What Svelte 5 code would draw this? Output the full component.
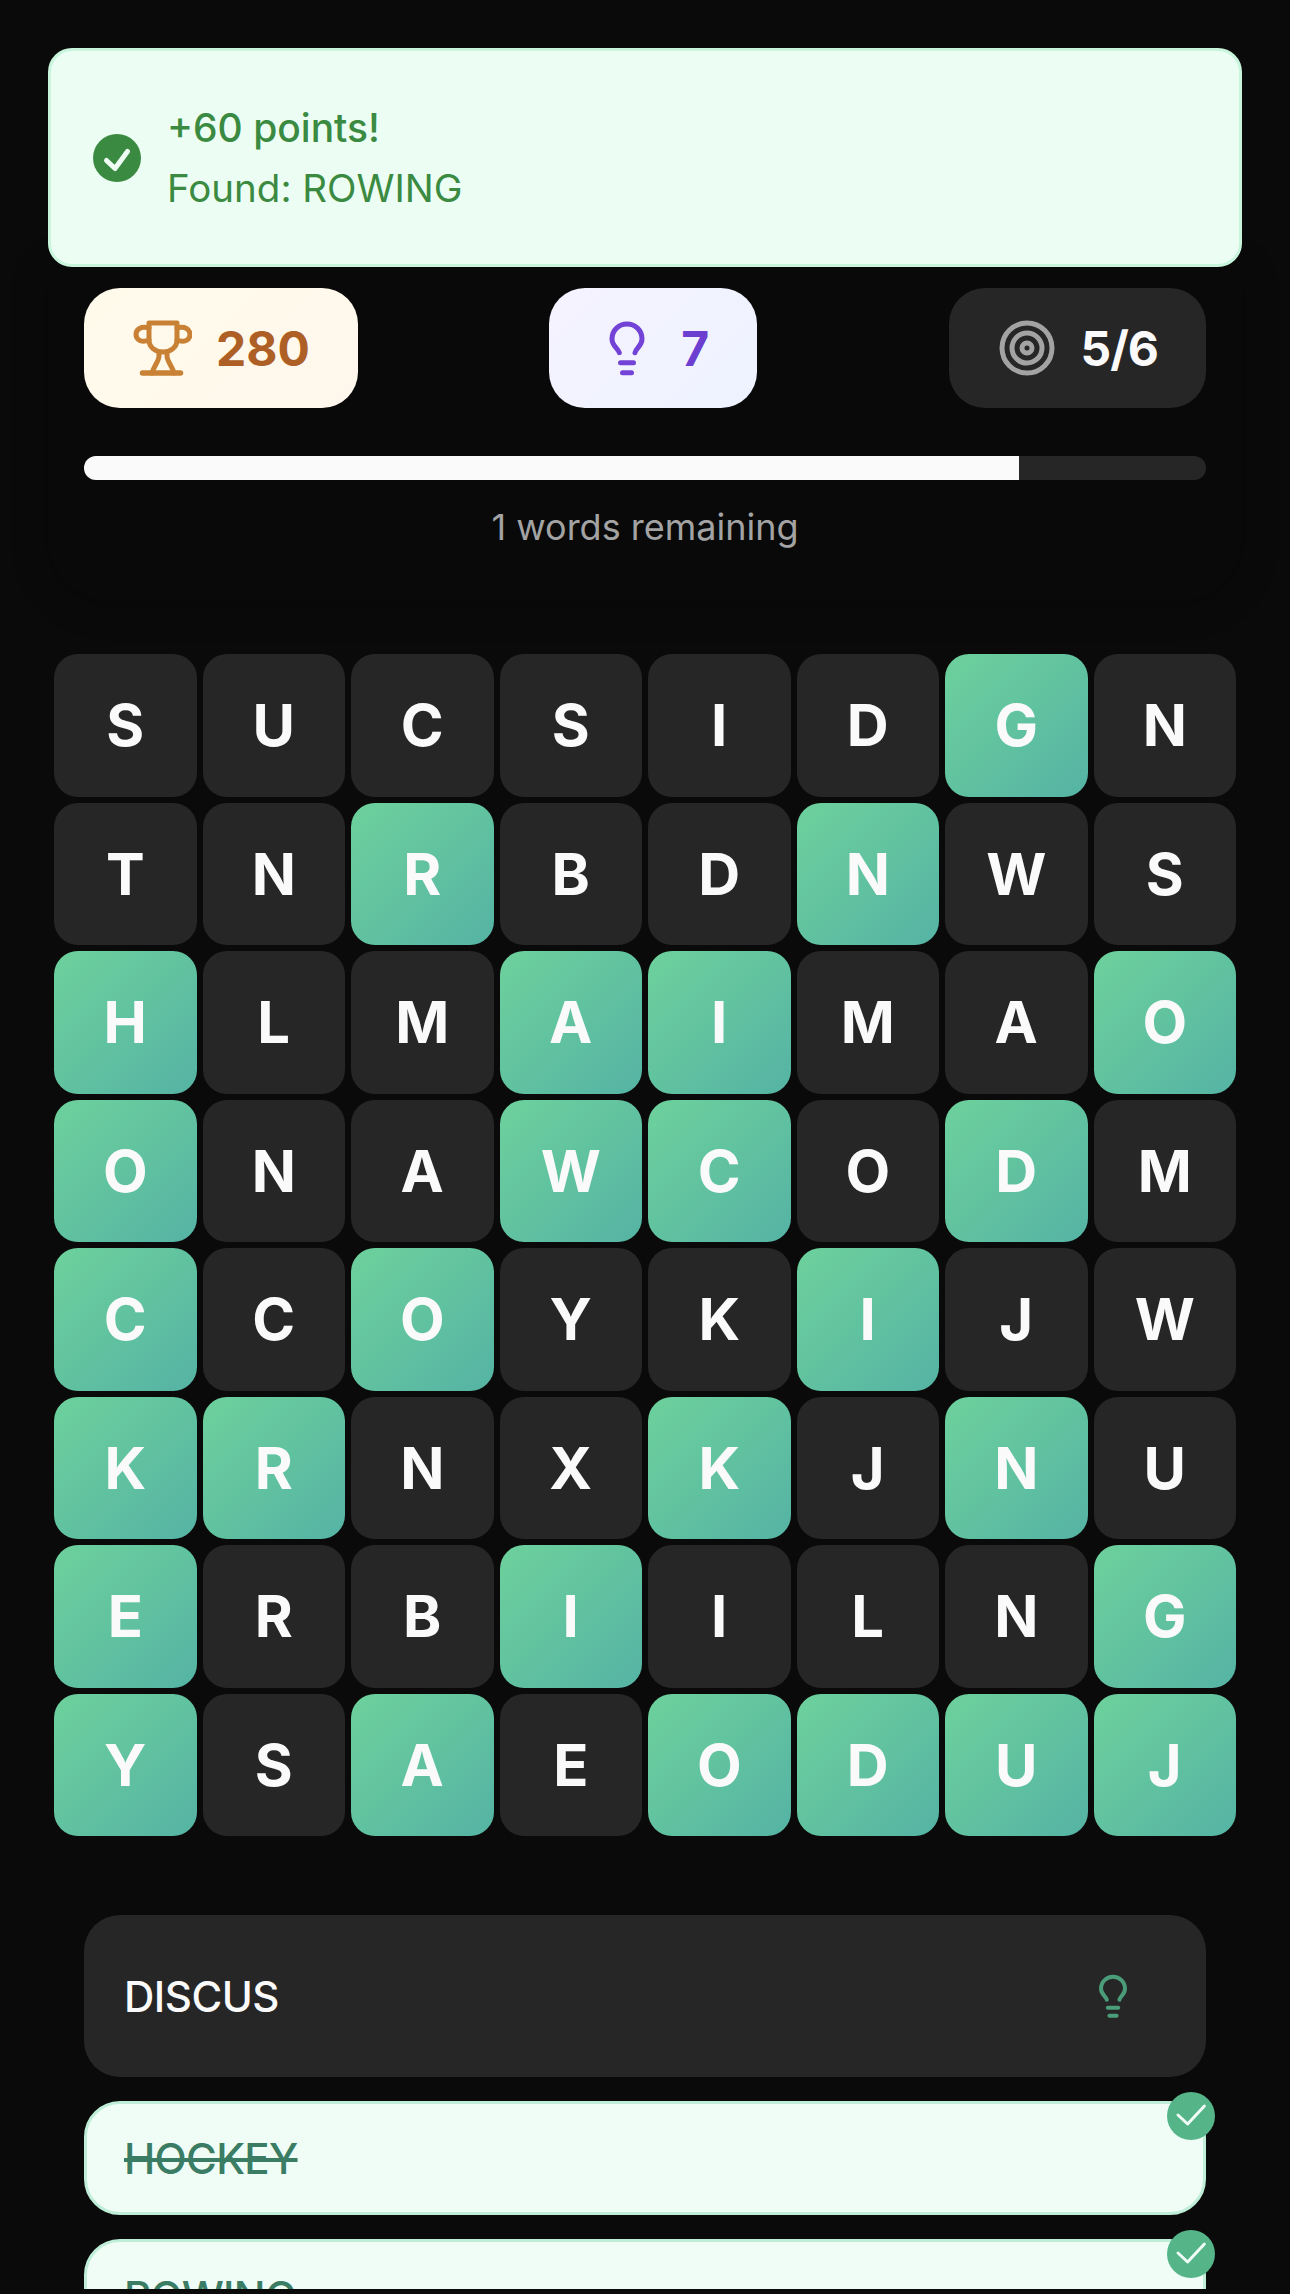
<script>
  const rows = [
    'SUCSIDGN',
    'TNRBDNWS',
    'HLMAIMAO',
    'ONAWCODM',
    'CCOYKIJW',
    'KRNXKJNU',
    'ERBIILNG',
    'YSAEODUJ'
  ]
  const found = new Set([
    '0-6', '1-2', '1-5', '2-0', '2-3', '2-4', '2-7', '3-0', '3-3', '3-4', '3-6',
    '4-0', '4-2', '4-5', '5-0', '5-1', '5-4', '5-6', '6-0', '6-3', '6-7',
    '7-0', '7-2', '7-4', '7-5', '7-6', '7-7'
  ])
  const doneWords = ['HOCKEY', 'ROWING']
</script>

<div class="screen">
  <div class="toast">
    <svg class="toast-icon" viewBox="0 0 48 48">
      <circle cx="24" cy="24" r="24" fill="#3a8a41" />
      <path d="M13.500 26.500 L22 34.500 L34.500 17.500" fill="none" stroke="#f0fdf4" stroke-width="5" stroke-linecap="round" stroke-linejoin="round" />
    </svg>
    <div class="toast-text">
      <p class="toast-title">+60 points!</p>
      <p class="toast-sub">Found: ROWING</p>
    </div>
  </div>

  <div class="header">
    <div class="stats">
      <div class="pill score">
        <svg viewBox="0 0 60 60" class="icon">
          <g fill="none" stroke="#c98235" stroke-width="5" stroke-linecap="round" stroke-linejoin="round">
            <path d="M17 5 H45 V22 C45 29 39 34 31 34 C23 34 17 29 17 22 Z" />
            <path d="M17 10 C9 8 4 11 4 16.500 C4 22 10 25 17 22" />
            <path d="M45 10 C53 8 58 11 58 16.500 C58 22 52 25 45 22" />
            <path d="M27 34 V38 C27 43 22 48 20 55 M35 34 V38 C35 43 40 48 42 55" />
            <path d="M10.500 55 H48.500" stroke-width="5.500" />
          </g>
        </svg>
        <span>280</span>
      </div>
      <div class="pill hints">
        <svg viewBox="0 0 60 60" class="icon">
          <g fill="none" stroke="#7243d6" stroke-width="5" stroke-linecap="round">
            <path d="M22.300 34.700 C21 30 15 28 15 21 C15 12 22 6 30 6 C38 6 45 12 45 21 C45 28 39 30 38 34.700" />
            <path d="M23.500 44.700 H36.500" />
            <path d="M25.500 54.700 H34.500" />
          </g>
        </svg>
        <span>7</span>
      </div>
      <div class="pill progress-pill">
        <svg viewBox="0 0 60 60" class="icon">
          <g fill="none" stroke="#a3a3a3" stroke-width="5">
            <circle cx="30" cy="30" r="25" />
            <circle cx="30" cy="30" r="15" />
            <circle cx="30" cy="30" r="5" />
          </g>
        </svg>
        <span>5/6</span>
      </div>
    </div>

    <div class="bar"><div class="bar-fill" style="width: 83.33%"></div></div>
    <p class="remaining">1 words remaining</p>
  </div>

  <div class="grid">
    {#each rows as row, r}
      {#each row.split('') as letter, c}
        <div class="tile" class:hit={found.has(r + '-' + c)}>{letter}</div>
      {/each}
    {/each}
  </div>

  <div class="words">
    <div class="word open">
      <span>DISCUS</span>
      <svg viewBox="0 0 60 60" class="word-bulb">
        <g fill="none" stroke="#4a9d78" stroke-width="5" stroke-linecap="round">
          <path d="M22.300 34.700 C21 30 15 28 15 21 C15 12 22 6 30 6 C38 6 45 12 45 21 C45 28 39 30 38 34.700" />
          <path d="M23.500 44.700 H36.500" />
          <path d="M25.500 54.700 H34.500" />
        </g>
      </svg>
    </div>
    {#each doneWords as w}
      <div class="word done">
        <span>{w}</span>
        <svg viewBox="0 0 48 48" class="badge">
          <circle cx="24" cy="24" r="24" fill="#55b488" />
          <path d="M11 23 L20.600 32 L37.400 14" fill="none" stroke="#f0fdf7" stroke-width="3" stroke-linecap="round" stroke-linejoin="round" />
        </svg>
      </div>
    {/each}
  </div>
</div>

<style>
  :global(body) {
    background: #0a0a0a;
  }

  .screen {
    height: 2289px;
    overflow: hidden;
    box-sizing: border-box;
    padding-top: 48px;
    background: #0a0a0a;
    font-family: Inter, "Noto Sans", sans-serif;
  }

  p {
    margin: 0;
  }

  .toast {
    position: relative;
    z-index: 1;
    box-sizing: border-box;
    height: 219px;
    margin: 0 48px;
    padding: 0 42px;
    display: flex;
    align-items: center;
    gap: 26px;
    background: #ecfdf3;
    border: 3px solid #c9f5dc;
    border-radius: 24px;
    color: #3a8a41;
  }

  .toast-icon {
    width: 48px;
    height: 48px;
    flex-shrink: 0;
  }

  .toast-title {
    font-size: 39px;
    font-weight: 500;
    line-height: 60px;
  }

  .toast-sub {
    font-size: 38.500px;
    line-height: 60px;
  }

  .header {
    margin: 0 48px;
    padding: 21px 36px 50px;
    border-radius: 0 0 60px 60px;
    background: #090909;
    box-shadow: 0 4px 36px rgba(0, 0, 0, 0.25);
  }

  .stats {
    display: flex;
    justify-content: space-between;
  }

  .pill {
    box-sizing: border-box;
    height: 120px;
    padding: 0 48px;
    display: flex;
    align-items: center;
    gap: 24px;
    border-radius: 36px;
    font-size: 48px;
    font-weight: 700;
  }

  .icon {
    width: 60px;
    height: 60px;
  }

  .score {
    background: linear-gradient(135deg, #fffbeb, #fff7ed);
    color: #ae5f26;
  }

  .hints {
    background: linear-gradient(135deg, #f5f3ff, #eef2ff);
    color: #6d3fd0;
  }

  .progress-pill {
    background: #262626;
    color: #fafafa;
    letter-spacing: -1px;
  }

  .bar {
    height: 24px;
    margin-top: 48px;
    border-radius: 12px;
    background: #262626;
    overflow: hidden;
  }

  .bar-fill {
    height: 100%;
    background: #fafafa;
  }

  .remaining {
    margin-top: 24px;
    text-align: center;
    font-size: 36px;
    line-height: 46px;
    color: #a3a3a3;
  }

  .grid {
    margin: 54px 54px 0;
    display: grid;
    grid-template-columns: repeat(8, 1fr);
    grid-auto-rows: 142.500px;
    gap: 6px;
  }

  .tile {
    display: flex;
    align-items: center;
    justify-content: center;
    border-radius: 24px;
    background: #262626;
    color: #fafafa;
    font-size: 58px;
    font-weight: 700;
  }

  .tile.hit {
    background: linear-gradient(135deg, #6dd19c, #55b3a4);
  }

  .words {
    margin: 79px 84px 0;
    display: flex;
    flex-direction: column;
    gap: 24px;
  }

  .word {
    position: relative;
    box-sizing: border-box;
    display: flex;
    align-items: center;
    justify-content: space-between;
    border-radius: 36px;
    font-size: 42px;
  }

  .open {
    height: 162px;
    padding: 0 48px 0 40px;
    background: #262626;
    color: #fafafa;
    font-weight: 500;
    letter-spacing: -0.500px;
  }

  .word-bulb {
    width: 48px;
    height: 48px;
    margin-right: 21px;
  }

  .done {
    height: 114px;
    flex-shrink: 0;
    padding: 0 37px;
    background: #f0fdf7;
    border: 3px solid #bfeed8;
    color: #3a7d64;
    font-weight: 500;
    letter-spacing: -0.700px;
    text-decoration: line-through;
  }

  .badge {
    position: absolute;
    top: -12px;
    right: -12px;
    width: 48px;
    height: 48px;
  }
</style>
